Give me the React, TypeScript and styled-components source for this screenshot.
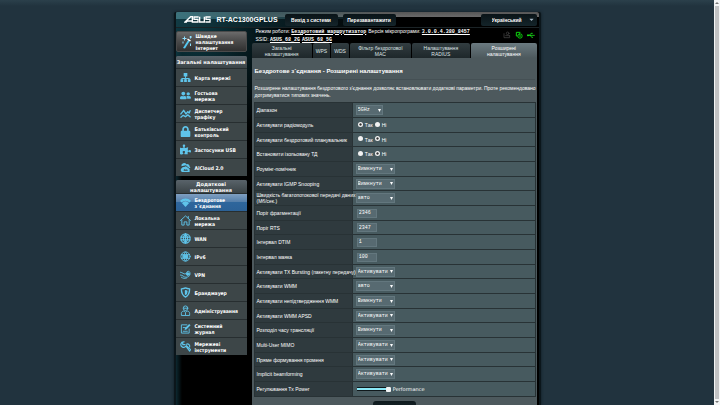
import React from "react";
import styled, { createGlobalStyle, css } from "styled-components";
import { FaUserFriends, FaLock, FaPuzzlePiece, FaCaretDown } from "react-icons/fa";

const sans = '"Liberation Sans", Arial, sans-serif';
const wide = '"DejaVu Sans", Verdana, sans-serif';
const menu = '"DejaVu Sans Condensed", "DejaVu Sans", Verdana, sans-serif';
const mono = '"Liberation Mono", "Courier New", monospace';

const Global = createGlobalStyle`
  *, *::before, *::after { box-sizing: border-box; }
  html, body { margin: 0; height: 100%; overflow: hidden; }
  body { background: #21333e; color: #fff; font: 5px/7px ${sans}; }
  button, select, input { margin: 0; padding: 0; color: inherit; border: 0; }
  a { color: inherit; }
`;

const Screen = styled.div`
  display: grid;
  grid-template-columns: minmax(0, 1fr) 6px;
  height: 100vh;
  background: linear-gradient(#2b404b, #21333e 6px);
`;

const ScrollTrack = styled.div`
  display: flex;
  flex-direction: column;
  background: #f4f5f5;
  color: #777;
`;

const ScrollArrow = styled.span`
  display: grid;
  place-items: center;
  height: 6px;
  svg { width: 4px; height: 4px; }
`;

const ScrollThumb = styled.span`
  flex: 1;
  margin: 0 1px;
  background: #c2c3c4;
`;

const Viewport = styled.div`
  display: flex;
  justify-content: center;
  overflow: hidden;
  padding-top: 12px;
`;

const Shell = styled.div`
  flex: 0 1 367px;
  min-width: 0;
  display: flex;
  flex-direction: column;
  border-radius: 2px 2px 0 0;
  border: solid #0b161b;
  border-width: 0 2px;
  box-shadow: 0 0 3px #0e191f;
  background:
    radial-gradient(ellipse 100px 130px at 20px 10px, #0d3a44, transparent),
    linear-gradient(90deg, #0c2830, transparent 6px) no-repeat,
    #000;
`;

const TopBar = styled.header`
  flex: none;
  display: flex;
  align-items: center;
  gap: 5px;
  height: 16px;
  padding: 0 2px 0 8px;
  border-bottom: 1px solid #1b2326;
  border-radius: 2px 2px 0 0;
  background:
    linear-gradient(90deg, #3b727c, rgba(50, 90, 98, .7) 90px, transparent 210px) 0 0 / 100% 7px no-repeat,
    linear-gradient(#555, #6a6a6a) 0 0 / 100% 5px no-repeat,
    linear-gradient(90deg, #123b44, #081b20 110px, #000 210px);
`;

const Model = styled.strong`
  flex: 1;
  font: bold 7px/10px ${sans};
  white-space: nowrap;
`;

const Logo = styled.svg`
  width: 27px;
  height: 7px;
  flex: none;
  margin-right: 1px;
`;

const HeadButton = styled.button`
  flex: none;
  width: 53px;
  height: 12px;
  border-radius: 2px;
  background: linear-gradient(#0a1418, #14242a);
  font: bold 5px/12px ${sans};
  white-space: nowrap;
`;

const Language = styled.label`
  flex: none;
  display: flex;
  align-items: center;
  justify-content: flex-end;
  gap: 4px;
  width: 56px;
  height: 12px;
  margin-left: 80px;
  padding-right: 2px;
  border-radius: 2px;
  background: linear-gradient(#0a1418, #14242a);
  svg { width: 7px; height: 7px; color: #a7b9c6; }
`;

const LanguageSelect = styled.select`
  appearance: none;
  width: 32px;
  height: 12px;
  background: none;
  font: bold 5px/12px ${sans};
`;

const Columns = styled.div`
  display: flex;
  align-items: flex-start;
  gap: 5px;
`;

const Sidebar = styled.nav`
  width: 71px;
  flex: none;
  display: flex;
  flex-direction: column;
  gap: 4px;
  padding-top: 3px;
  font: bold 5px/6px ${menu};
`;

const QuickSetup = styled.a`
  display: flex;
  align-items: center;
  gap: 4px;
  height: 21px;
  padding: 0 4px;
  border: 1px solid #4a4a4a;
  border-radius: 2px;
  background: linear-gradient(#6b6b6b, #4c4c4c 45%, #303030);
  text-decoration: none;
  svg { width: 11px; height: 14px; flex: none; }
`;

const MenuGroup = styled.section`
  border-radius: 2px 2px 0 0;
  overflow: hidden;
  background: #3d4648;
`;

const MenuTitle = styled.h2<{ $short?: boolean }>`
  display: flex;
  align-items: center;
  justify-content: center;
  height: ${(p) => (p.$short ? 12 : 13)}px;
  margin: 0;
  font: bold 5px/6px ${wide};
  text-align: center;
  background: linear-gradient(#59636a, #3b4447);
`;

const MenuItem = styled.a<{ $active?: boolean }>`
  display: flex;
  align-items: center;
  gap: 4px;
  height: 18px;
  padding: 0 4px;
  text-decoration: none;
  white-space: pre-line;
  border-top: 1px solid #272e30;
  background: ${(p) => (p.$active ? "linear-gradient(#7f9fc1, #5680ab 45%, #2e669c 50%, #2c6196)" : "#3d4648")};
  svg { width: 11px; height: 11px; flex: none; color: #5fc4ea; }
`;

const Main = styled.main`
  flex: 1;
  min-width: 0;
  padding-right: 2px;
`;

const Status = styled.div`
  display: flex;
  align-items: center;
  justify-content: space-between;
  height: 15px;
  padding: 0 0 0 4px;
  white-space: nowrap;
`;

const StatusLine = styled.div`
  display: flex;
  gap: 2px;
`;

const StatusLink = styled.a`
  font: bold 5px/7px ${mono};
`;

const StatusIcons = styled.div`
  display: flex;
  gap: 4px;
  padding: 0 2px 1px 0;
  svg { width: 8px; height: 8px; }
`;

const Tabs = styled.div`
  display: grid;
  grid-template-columns: 60fr 17fr 18fr 60fr 58fr 65fr;
  gap: 1px;
  height: 15px;
`;

const Tab = styled.button<{ $active?: boolean }>`
  border-radius: 2px 2px 0 0;
  background: ${(p) => (p.$active ? "linear-gradient(#6b7a80, #4d595d)" : "linear-gradient(#323d41, #1e272a)")};
  color: ${(p) => (p.$active ? "#fff" : "#dfe4e6")};
  font: 5px/6px ${sans};
  white-space: pre-line;
`;

const Panel = styled.div`
  padding: 9px 1px 0 2px;
  background: #4d595d;
`;

const Title = styled.h1`
  margin: 0 1px 5px;
  padding-bottom: 4px;
  border-bottom: 1px solid #455054;
  font: bold 6px/8px ${sans};
`;

const Intro = styled.p`
  margin: 0 0 3px 1px;
  white-space: nowrap;
`;

const Settings = styled.table`
  width: 100%;
  table-layout: fixed;
  border-collapse: collapse;
  tr { height: 15px; }
  tr:nth-child(3n) { height: 14px; }
  th, td {
    padding: 0 3px;
    border: 1px solid #283235;
    line-height: 6px;
    vertical-align: middle;
    text-align: left;
    font-weight: normal;
  }
  th { width: 35%; padding: 0 0 0 2px; background: #2f3a3e; white-space: pre; }
  td { background: #475a5f; }
`;

const field = css`
  display: block;
  border: 1px solid #63777e;
  background: #576a71;
  font: 5px/8px ${mono};
`;

const SelectBox = styled.span<{ $small?: boolean }>`
  display: grid;
  grid-template-columns: minmax(0, 1fr);
  align-items: center;
  width: ${(p) => (p.$small ? 27 : 39)}px;
  > * { grid-area: 1 / 1; }
  svg { justify-self: end; width: 3px; height: 3px; margin-right: 2px; pointer-events: none; }
`;

const Select = styled.select`
  ${field}
  appearance: none;
  width: 100%;
  height: 10px;
  padding-left: 1px;
`;

const TextInput = styled.input`
  ${field}
  width: 20px;
  height: 9px;
  padding-left: 1px;
  margin-left: 1px;
`;

const Choices = styled.div`
  display: flex;
  gap: 2px;
  padding-left: 2px;
  label { display: flex; align-items: center; gap: 2px; }
`;

const Radio = styled.input`
  appearance: none;
  width: 5px;
  height: 5px;
  margin-bottom: 2px;
  border-radius: 50%;
  background: #f2f2f2;
  &:checked { background: radial-gradient(circle, #333 20%, #f2f2f2 45%); }
`;

const Power = styled.label`
  display: flex;
  align-items: center;
  gap: 2px;
  padding-left: 1px;
  font-family: ${wide};
`;

const Slider = styled.input`
  appearance: none;
  width: 34px;
  height: 5px;
  background: linear-gradient(#8be9f7, #8be9f7) center / 100% 2px no-repeat, linear-gradient(#10181b, #10181b) center / 100% 4px no-repeat;
  &::-webkit-slider-thumb {
    appearance: none;
    width: 5px;
    height: 5px;
    border-radius: 1px;
    background: #f3f5f5;
  }
`;

const Apply = styled.button`
  display: block;
  width: 43px;
  height: 12px;
  margin: 4px auto;
  border-radius: 3px;
  background: linear-gradient(#0e191d, #1c2b31);
  font: bold 5px/12px ${sans};
`;

const line = { fill: "none", stroke: "currentColor", strokeWidth: 2, strokeLinejoin: "round", strokeLinecap: "round" } as const;

const icons: Record<string, React.ReactNode> = {
  map: <svg viewBox="0 0 24 24" fill="currentColor"><path d="M8 2h8v8h-3v3h8v3h2v6h-6v-6h2v-1h-6v1h2v6H9v-6h2v-1H5v1h2v6H1v-6h2v-3h8v-3H8z" /></svg>,
  guests: <FaUserFriends />,
  traffic: <svg viewBox="0 0 24 24" {...line} strokeWidth={3}><path d="M2 13l6-8 5 8 4-5 3 3 2-5" /><path d="M2 20l5-4 5 3 5-4 5 4" /></svg>,
  lock: <FaLock />,
  puzzle: <FaPuzzlePiece />,
  cloud: <svg viewBox="0 0 24 24" fill="currentColor"><path d="M3 9a6 6 0 0 1 11-4 5 5 0 0 1 7 5l2 3h-3L13 7z" /><path d="M13 9l8 6v7H5a5 5 0 0 1-1-9 5 5 0 0 1 5-2z" /><path d="M8 19c0-4 3-4 4-2 3-2 5 0 5 2z" fill="#3d4648" /></svg>,
  wifi: <svg viewBox="0 0 24 24" fill="currentColor"><path d="M0 8a18 18 0 0 1 24 0l-3 4a14 14 0 0 0-18 0z" /><path d="M4 13a12 12 0 0 1 16 0l-8 9z" /></svg>,
  home: <svg viewBox="0 0 24 24" {...line}><path d="M1 12L12 2l11 10M4 11v11h5v-7h6v7h5V11M18 3v4" /></svg>,
  globe: <svg viewBox="0 0 24 24" {...line} strokeWidth={2.5}><circle cx="12" cy="12" r="10" /><path d="M12 2v20M2 9h20M2 15h20M12 2c-6 5-6 15 0 20M12 2c6 5 6 15 0 20" /></svg>,
  ipv6: <svg viewBox="0 0 24 24" {...line}><circle cx="12" cy="12" r="10" /><path d="M3 8h18M3 16h18M12 2C7 7 7 17 12 22M12 2c5 5 5 15 0 20" /><rect x="7" y="9" width="10" height="6" fill="currentColor" /></svg>,
  vpn: <svg viewBox="0 0 24 24" {...line}><path d="M1 7c5 1 7 4 10 4s3-6 7-6 5 5 2 7M1 13c5 0 7 5 12 5s8-2 9-7M3 18c4 3 8 3 11 2" /><circle cx="17" cy="11" r="3" fill="currentColor" /></svg>,
  shield: <svg viewBox="0 0 24 24" {...line} strokeWidth={3}><path d="M12 2c3 2 6 2 9 2 0 9-2 15-9 18-7-3-9-9-9-18 3 0 6 0 9-2z" /><path d="M12 8v8c2-1 3-4 3-7z" fill="currentColor" /></svg>,
  admin: <svg viewBox="0 0 24 24" {...line}><circle cx="12" cy="7" r="5" /><path d="M3 22v-4c0-3 3-5 6-5l3 3 3-3c3 0 6 2 6 5v4zM8 7h8M12 17v4" /></svg>,
  log: <svg viewBox="0 0 24 24" {...line}><path d="M20 13v9H3V4h12M7 10h5M7 18h9" /><path d="M10 15l1-4 9-9 3 3-9 9z" fill="currentColor" stroke="none" /></svg>,
  tools: <svg viewBox="0 0 24 24" {...line} strokeWidth={2.5}><path d="M9 2a6 6 0 1 0 4 9l8 11 2-3-9-9M6 3v5h5" /><path d="M14 7a5 5 0 0 1 7 6" /></svg>,
};

const general = [
  ["map", "Карта мережі"], ["guests", "Гостьова\nмережа"], ["traffic", "Диспетчер\nтрафіку"],
  ["lock", "Батьківський\nконтроль"], ["puzzle", "Застосунки USB"], ["cloud", "AiCloud 2.0"],
];

const advanced = [
  ["wifi", "Бездротове\nз´єднання"], ["home", "Локальна\nмережа"], ["globe", "WAN"], ["ipv6", "IPv6"], ["vpn", "VPN"],
  ["shield", "Брандмауер"], ["admin", "Адміністрування"], ["log", "Системний\nжурнал"], ["tools", "Мережеві\nінструменти"],
];

const tabs = ["Загальні\nналаштування", "WPS", "WDS", "Фільтр бездротової\nMAC", "Налаштування\nRADIUS", "Розширені\nналаштування"];

type Setting = { label: string; kind: "select" | "radio" | "text" | "range"; value: string };

const settings: Setting[] = [
  { label: "Діапазон", kind: "select", value: "5GHz" },
  { label: "Активувати радіомодуль", kind: "radio", value: "Так" },
  { label: "Активувати бездротовий планувальник", kind: "radio", value: "Ні" },
  { label: "Встановити ізольовану ТД", kind: "radio", value: "Ні" },
  { label: "Роумінг-помічник", kind: "select", value: "Вимкнути" },
  { label: "Активувати IGMP Snooping", kind: "select", value: "Вимкнути" },
  { label: "Швидкість багатопотокової передачі даних\n(Мб/сек.)", kind: "select", value: "авто" },
  { label: "Поріг фрагментації", kind: "text", value: "2346" },
  { label: "Поріг RTS", kind: "text", value: "2347" },
  { label: "Інтервал DTIM", kind: "text", value: "1" },
  { label: "Інтервал маяка", kind: "text", value: "100" },
  { label: "Активувати TX Bursting (пакетну передачу)", kind: "select", value: "Активувати" },
  { label: "Активувати WMM", kind: "select", value: "авто" },
  { label: "Активувати непідтвердження WMM", kind: "select", value: "Вимкнути" },
  { label: "Активувати WMM APSD", kind: "select", value: "Активувати" },
  { label: "Розподіл часу трансляції", kind: "select", value: "Вимкнути" },
  { label: "Multi-User MIMO", kind: "select", value: "Активувати" },
  { label: "Пряме формування променя", kind: "select", value: "Активувати" },
  { label: "Implicit beamforming", kind: "select", value: "Активувати" },
  { label: "Регулювання Tx Power", kind: "range", value: "Performance" },
];

function Control({ setting, id }: { setting: Setting; id: string }) {
  const { kind, value, label } = setting;
  if (kind === "select")
    return (
      <SelectBox $small={value === "5GHz"}>
        <Select id={id} defaultValue={value}><option>{value}</option></Select>
        <svg viewBox="0 0 6 6" fill="#fff" aria-hidden="true"><path d="M0 0h6L3 6z" /></svg>
      </SelectBox>
    );
  if (kind === "text") return <TextInput id={id} type="text" defaultValue={value} />;
  if (kind === "radio")
    return (
      <Choices role="radiogroup" aria-label={label}>
        {["Так", "Ні"].map((option, i) => (
          <label key={option}>
            <Radio id={i === 0 ? id : undefined} type="radio" name={id} defaultChecked={option === value} />
            {option}
          </label>
        ))}
      </Choices>
    );
  return <Power><Slider id={id} type="range" min={0} max={100} defaultValue={100} />{value}</Power>;
}

function Menu({ title, items, active, short }: { title: string; items: string[][]; active?: string; short?: boolean }) {
  return (
    <MenuGroup>
      <MenuTitle $short={short}>{title}</MenuTitle>
      {items.map(([icon, label]) => (
        <MenuItem key={label} href="#" $active={icon === active}>
          {icons[icon]}
          <span>{label}</span>
        </MenuItem>
      ))}
    </MenuGroup>
  );
}

export default function App() {
  return (
    <Screen>
      <Global />
      <Viewport>
        <Shell>
          <TopBar>
            <Logo viewBox="0 0 81 21" fill="none" stroke="#fff" strokeWidth="4" role="img" aria-label="ASUS">
              <path d="M1 20L20 2h5v18M9 15h16M5 20l7-7" />
              <path d="M44 3H30v7h12v8H27M47 2v16h14V2M80 3H66v7h12v8H64" />
            </Logo>
            <Model>RT-AC1300GPLUS</Model>
            <HeadButton>Вихід з системи</HeadButton>
            <HeadButton>Перезавантажити</HeadButton>
            <Language>
              <LanguageSelect aria-label="Мова" defaultValue="Український"><option>Український</option></LanguageSelect>
              <FaCaretDown />
            </Language>
          </TopBar>
          <Columns>
            <Sidebar>
              <QuickSetup href="#">
                <svg viewBox="0 0 22 28">
                  <path d="M4 26L15 9l3 2L8 27z" fill="#55c8f2" />
                  <path d="M13 8l6 4" stroke="#fff" strokeWidth="3" />
                  <path d="M7 3v8M3 7h8M19 2v5M17 4h5M4 13v4M19 17v5" stroke="#8fe0ff" strokeWidth="2" />
                </svg>
                <span>Швидке налаштування Інтернет</span>
              </QuickSetup>
              <Menu title="Загальні налаштування" items={general} short />
              <Menu title="Додаткові налаштування" items={advanced} active="wifi" />
            </Sidebar>
            <Main>
              <Status>
                <div>
                  <StatusLine>
                    <span>Режим роботи: <StatusLink href="#">Бездротовий маршрутизатор</StatusLink></span>
                    <span>Версія мікропрограми: <StatusLink href="#">3.0.0.4.380_8457</StatusLink></span>
                  </StatusLine>
                  <StatusLine>
                    <span>SSID: <StatusLink href="#">ASUS_68_2G</StatusLink></span>
                    <span><StatusLink href="#">ASUS_68_5G</StatusLink></span>
                  </StatusLine>
                </div>
                <StatusIcons>
                  <svg viewBox="0 0 24 24" {...line} stroke="#4c4c4c"><circle cx="14" cy="7" r="4" /><path d="M3 8v12h17v-5M8 14h12" /></svg>
                  <svg viewBox="0 0 24 24" {...line} stroke="#0ed50e" strokeWidth={3}><path d="M15 4H4v11h3" /><rect x="9" y="9" width="12" height="12" rx="4" /><path d="M13 15h4" /></svg>
                  <svg viewBox="0 0 24 24" {...line} stroke="#19e619" strokeWidth={2.5}><path d="M2 13h20M7 13l5-6h4M10 13l4 6h3" /><circle cx="3" cy="13" r="2" fill="#19e619" /></svg>
                </StatusIcons>
              </Status>
              <Tabs role="tablist">
                {tabs.map((t, i) => (
                  <Tab key={t} role="tab" aria-selected={i === 5} $active={i === 5}>{t}</Tab>
                ))}
              </Tabs>
              <Panel>
                <Title>Бездротове з´єднання - Розширені налаштування</Title>
                <Intro>
                  Розширене налаштування бездротового з'єднання дозволяє встановлювати додаткові параметри. Проте рекомендовано
                  <br />
                  дотримуватися типових значень.
                </Intro>
                <Settings>
                  <tbody>
                    {settings.map((s, i) => (
                      <tr key={s.label}>
                        <th scope="row"><label htmlFor={`setting-${i}`}>{s.label}</label></th>
                        <td><Control setting={s} id={`setting-${i}`} /></td>
                      </tr>
                    ))}
                  </tbody>
                </Settings>
                <Apply>Застосувати</Apply>
              </Panel>
            </Main>
          </Columns>
        </Shell>
      </Viewport>
      <ScrollTrack aria-hidden="true">
        <ScrollArrow><svg viewBox="0 0 8 8" fill="currentColor"><path d="M0 6l4-4 4 4z" /></svg></ScrollArrow>
        <ScrollThumb />
        <ScrollArrow><svg viewBox="0 0 8 8" fill="currentColor"><path d="M0 2l4 4 4-4z" /></svg></ScrollArrow>
      </ScrollTrack>
    </Screen>
  );
}
